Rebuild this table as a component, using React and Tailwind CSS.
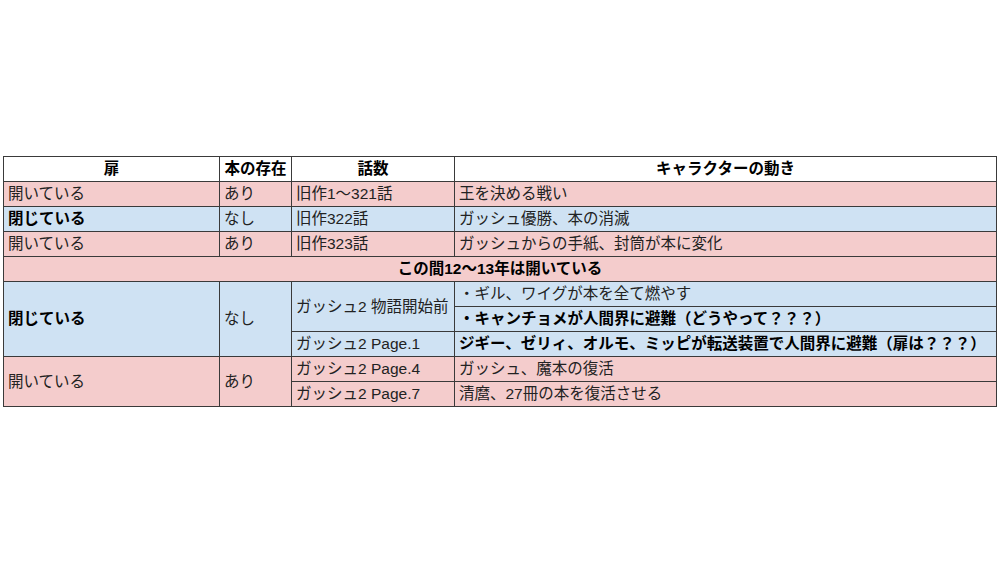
import React from "react";

const PINK = "bg-[#f4cccc]";
const BLUE = "bg-[#cfe2f3]";

function Td({ children, className = "", ...rest }) {
  return (
    <td
      {...rest}
      className={`border border-[#3a3a3a] px-[4px] h-[25px] p-0 leading-[22px] whitespace-nowrap align-middle ${className}`}
    >
      {children}
    </td>
  );
}

export default function App() {
  return (
    <div
      className="w-[1000px] h-[562px] bg-white pt-[156px] pl-[3px] text-[15.5px] text-[#222]"
      style={{ fontFamily: '"Liberation Sans", "Noto Sans CJK JP", sans-serif' }}
    >
      <table className="border-collapse table-fixed w-[993px]">
        <colgroup>
          <col className="w-[216px]" />
          <col className="w-[72px]" />
          <col className="w-[163px]" />
          <col className="w-[542px]" />
        </colgroup>
        <tbody>
          <tr className="bg-white font-bold text-black">
            <Td className="text-center">扉</Td>
            <Td className="text-center px-[1px]">本の存在</Td>
            <Td className="text-center">話数</Td>
            <Td className="text-center">キャラクターの動き</Td>
          </tr>
          <tr className={PINK}>
            <Td>開いている</Td>
            <Td>あり</Td>
            <Td>旧作1〜321話</Td>
            <Td>王を決める戦い</Td>
          </tr>
          <tr className={BLUE}>
            <Td className="font-bold text-black">閉じている</Td>
            <Td>なし</Td>
            <Td>旧作322話</Td>
            <Td>ガッシュ優勝、本の消滅</Td>
          </tr>
          <tr className={PINK}>
            <Td>開いている</Td>
            <Td>あり</Td>
            <Td>旧作323話</Td>
            <Td>ガッシュからの手紙、封筒が本に変化</Td>
          </tr>
          <tr className={PINK}>
            <Td colSpan={4} className="text-center font-bold text-black">
              この間12〜13年は開いている
            </Td>
          </tr>
          <tr className={BLUE}>
            <Td rowSpan={3} className="font-bold text-black">
              閉じている
            </Td>
            <Td rowSpan={3}>なし</Td>
            <Td rowSpan={2}>ガッシュ2 物語開始前</Td>
            <Td>・ギル、ワイグが本を全て燃やす</Td>
          </tr>
          <tr className={BLUE}>
            <Td className="font-bold text-black">・キャンチョメが人間界に避難（どうやって？？？）</Td>
          </tr>
          <tr className={BLUE}>
            <Td>ガッシュ2 Page.1</Td>
            <Td className="font-bold text-black">
              ジギー、ゼリィ、オルモ、ミッピが転送装置で人間界に避難（扉は？？？）
            </Td>
          </tr>
          <tr className={PINK}>
            <Td rowSpan={2}>開いている</Td>
            <Td rowSpan={2}>あり</Td>
            <Td>ガッシュ2 Page.4</Td>
            <Td>ガッシュ、魔本の復活</Td>
          </tr>
          <tr className={PINK}>
            <Td>ガッシュ2 Page.7</Td>
            <Td>清麿、27冊の本を復活させる</Td>
          </tr>
        </tbody>
      </table>
    </div>
  );
}
